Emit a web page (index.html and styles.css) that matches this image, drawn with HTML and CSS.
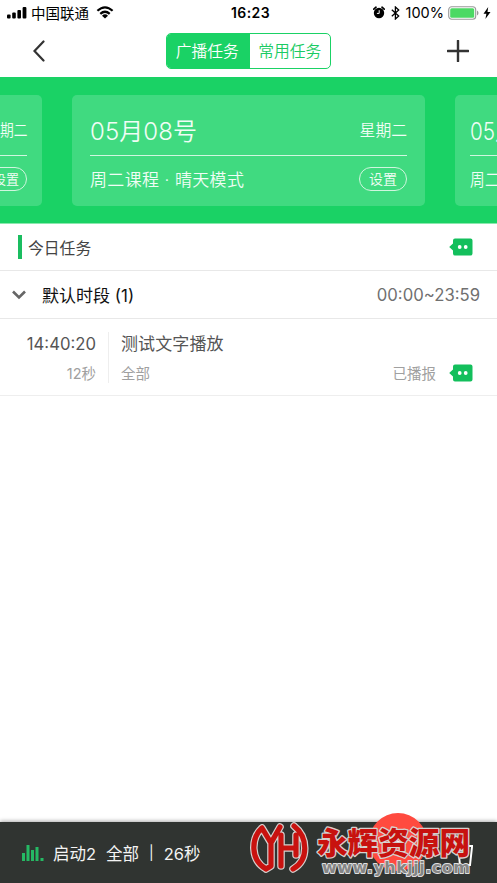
FILE: index.html
```html
<!DOCTYPE html>
<html lang="zh-CN">
<head>
<meta charset="utf-8">
<title>广播任务</title>
<link rel="stylesheet" href="styles.css">
</head>
<body>
<div class="app">
  <header class="status">
    <svg class="signal" width="20" height="12" viewBox="0 0 20 12"><rect x="0" y="7.5" width="3.6" height="4" rx="1"/><rect x="5.2" y="5.5" width="3.6" height="6" rx="1"/><rect x="10.4" y="3" width="3.6" height="8.500" rx="1"/><rect x="15.600" y="0" width="3.8" height="11.500" rx="1"/></svg>
    <span class="carrier">中国联通</span>
    <svg class="wifi" width="18" height="13" viewBox="0 0 18 13"><g fill="none" stroke="#000" stroke-width="2.200"><path d="M1.400 4.800Q9-2.200 16.600 4.800"/><path d="M4.300 7.900Q9 3.600 13.700 7.900"/></g><path d="M6 9.700Q9 7 12 9.700L9 12.600Z"/></svg>
    <span class="clock">16:23</span>
    <div class="system">
      <svg width="12" height="13" viewBox="0 0 12 13"><circle cx="6" cy="7" r="5.200"/><path d="M.8 3.200 3 1.200M11.200 3.200 9 1.200" stroke="#000" stroke-width="1.700" stroke-linecap="round"/><path d="M6.200 4.200v3.200H3.900" stroke="#fff" fill="none"/></svg>
      <svg class="bluetooth" width="9" height="14" viewBox="0 0 9 14"><path d="M.8 3.800 7.700 10 4.400 13V1L7.700 4 .8 10.200" fill="none" stroke="#000" stroke-width="1.300"/></svg>
      <span class="percent">100%</span>
      <svg class="battery" width="31" height="14" viewBox="0 0 31 14"><rect x=".7" y=".7" width="27" height="12.600" rx="3" fill="#fff" stroke="#999" stroke-width="1.100"/><rect x="2.200" y="2.200" width="24" height="9.600" rx="1.500" fill="#4cd964"/><path d="M29 4.600q1.500.6 1.500 2.400T29 9.400Z" fill="#999"/></svg>
      <svg class="bolt" width="8" height="12" viewBox="0 0 8 12"><path d="M5.200 0 .5 6.700h2.900L2.400 12 7.500 4.900H4.500Z"/></svg>
    </div>
  </header>
  <nav class="nav">
    <svg class="back" width="12" height="22" viewBox="0 0 12 22"><path d="M10.500 1.500 1.500 11l9 9.500" fill="none" stroke="#333" stroke-width="2.200" stroke-linecap="round"/></svg>
    <div class="tabs"><span class="tab active">广播任务</span><span class="tab">常用任务</span></div>
    <svg class="add" width="22" height="22" viewBox="0 0 22 22"><path d="M11 .8v20.400M.8 11h20.400" stroke="#333" stroke-width="2.400" stroke-linecap="round"/></svg>
  </nav>
  <section class="carousel">
    <article class="card side">
      <div class="card-top"><span class="date">05月08号</span><span class="weekday">星期二</span></div>
      <div class="card-bottom"><span class="mode">周二课程 · 晴天模式</span><span class="setting">设置</span></div>
    </article>
    <article class="card">
      <div class="card-top"><span class="date">05月08号</span><span class="weekday">星期二</span></div>
      <div class="card-bottom"><span class="mode">周二课程 · 晴天模式</span><span class="setting">设置</span></div>
    </article>
    <article class="card side">
      <div class="card-top"><span class="date">05月08号</span><span class="weekday">星期二</span></div>
      <div class="card-bottom"><span class="mode">周二课程 · 晴天模式</span><span class="setting">设置</span></div>
    </article>
  </section>
  <section class="today">
    <i class="marker"></i><h2>今日任务</h2>
    <svg class="bubble" width="24" height="18" viewBox="0 0 24 18"><path d="M6 .5h15.500q2 0 2 2v13q0 2-2 2H6q-2 0-2-2V12.500L.2 9 4 5.500V2.500q0-2 2-2Z" fill="#13bf5c"/><circle cx="10.700" cy="9" r="1.900" fill="#fff"/><circle cx="16.700" cy="9" r="1.900" fill="#fff"/></svg>
  </section>
  <section class="group">
    <svg width="14" height="10" viewBox="0 0 14 10"><path d="m1 1.500 6 6 6-6" fill="none" stroke="#666" stroke-width="2.600"/></svg>
    <h3>默认时段 (1)</h3>
    <span class="range">00:00~23:59</span>
  </section>
  <section class="task">
    <div class="time"><span class="start">14:40:20</span><span class="sub">12秒</span></div>
    <div class="detail"><span class="name">测试文字播放</span><span class="sub">全部</span></div>
    <div class="state"><span class="sub">已播报</span>
      <svg class="bubble" width="24" height="18" viewBox="0 0 24 18"><path d="M6 .5h15.500q2 0 2 2v13q0 2-2 2H6q-2 0-2-2V12.500L.2 9 4 5.500V2.500q0-2 2-2Z" fill="#13bf5c"/><circle cx="10.700" cy="9" r="1.900" fill="#fff"/><circle cx="16.700" cy="9" r="1.900" fill="#fff"/></svg>
    </div>
  </section>
  <footer class="player">
    <svg class="bars" width="22" height="18" viewBox="0 0 22 18" fill="#25b964"><rect x="0" y="9" width="3" height="8"/><rect x="4.500" y="1" width="3" height="16"/><rect x="9" y="6" width="3" height="11"/><rect x="13.500" y="3" width="3" height="14"/><rect x="18.500" y="14" width="3" height="3"/></svg>
    <span class="p-name">启动2</span><span class="p-zone">全部</span><span class="p-sep">|</span><span class="p-time">26秒</span>
    <i class="record"></i>
    <svg class="brand" width="247" height="63" viewBox="250 820 247 63">
      <defs><path id="mark" d="M262 828C251 838 250 860 266 869M262 828l9 15 9-16M271 843v23L266 869M281 835v31M281 848h15M296 835v20M294 826C308 837 309 860 293 869"/></defs>
      <path d="M391 837l12 6-12 7Z" fill="#fff"/>
      <path d="M455 846h18M458 847l2 18h10l2-18M461 846v-3h6v3" fill="none" stroke="#fff" stroke-width="2"/>
      <g fill="none" stroke-linejoin="round" stroke-linecap="round">
        <use href="#mark" stroke="#d6d1cf" stroke-width="7.600"/>
        <use href="#mark" stroke="#c8120f" stroke-width="5.200"/>
      </g>
      <text class="brand-name" x="317" y="853.500" textLength="153" lengthAdjust="spacingAndGlyphs">永辉资源网</text>
      <text class="brand-url" x="322" y="873" textLength="148" lengthAdjust="spacing">www.yhkjjj.com</text>
    </svg>
  </footer>
</div>
</body>
</html>
```
FILE: styles.css
```css
* { box-sizing: border-box; }
body { margin: 0; background: #fff; font-family: Inter, "Noto Sans CJK SC", sans-serif; }
svg { display: block; flex: none; }
h2, h3 { margin: 0; font-weight: 400; }
span { white-space: nowrap; }
.app { width: 497px; height: 883px; display: flex; flex-direction: column; overflow: hidden; }

.status { height: 25px; display: flex; align-items: center; padding: 0 6px 0 7px; line-height: 25px; color: #000; }
.carrier { margin-left: 4px; padding-top: 1px; font-size: 14.5px; }
.wifi { margin-left: 7px; }
.clock { margin-left: 117px; font-size: 14px; font-weight: 600; letter-spacing: .4px; }
.system { margin-left: auto; display: flex; align-items: center; }
.bluetooth { margin-left: 6px; }
.percent { margin-left: 6px; font-size: 14.5px; }
.battery { margin-left: 4px; }
.bolt { margin-left: 4px; }

.nav { height: 52px; display: flex; align-items: center; justify-content: space-between; padding: 0 28px 0 33px; }
.tabs { width: 165px; height: 36px; margin-left: 5px; display: flex; border: 1px solid #1ad265; border-radius: 5px; overflow: hidden; }
.tab { flex: 1; padding-top: 1px; text-align: center; line-height: 34px; font-size: 15.8px; font-weight: 350; color: #1acb63; }
.tab:first-child { padding-right: 2px; }
.active { background: #1ad265; color: #fff; }

.carousel { height: 147px; padding-top: 18px; background: #1ad265; display: flex; justify-content: center; gap: 30px; border-bottom: 1px solid #8be8ae; }
.card { flex: none; width: 353px; height: 111px; padding: 14px 18px; border-radius: 5px; background: #40da80; color: #f0fdf5; font-weight: 350; }
.side { padding: 14px 15px; }
.card-top { height: 47px; padding-bottom: 5px; display: flex; align-items: center; justify-content: space-between; border-bottom: 1px solid #d0f6df; }
.date { padding-bottom: 1px; font-size: 24px; letter-spacing: .1px; }
.weekday { font-size: 15.8px; }
.card-bottom { height: 46px; display: flex; align-items: center; justify-content: space-between; }
.mode { padding-bottom: 2px; font-size: 17px; letter-spacing: .36px; }
.side .date, .side .mode { transform: scaleX(.86); transform-origin: left; }
.side .weekday { transform: scaleX(.87); transform-origin: right; }
.setting { width: 48px; height: 24px; border: 1px solid #d0f6df; border-radius: 12px; text-align: center; font-size: 14px; line-height: 22px; }
.side .setting { width: 42px; font-size: 13px; }

.today { height: 47px; display: flex; align-items: center; padding: 0 24px 0 18px; border-bottom: 1px solid #e8e8e8; color: #444; }
.marker { width: 4px; height: 24px; background: #1abd60; }
.today h2 { margin-left: 6px; padding-top: 3px; font-size: 15.8px; line-height: 24px; }
.bubble { margin-left: auto; }
.group { height: 48px; display: flex; align-items: center; padding: 0 17px 0 12px; border-bottom: 1px solid #e8e8e8; }
.group h3 { margin-left: 16px; padding-top: 2px; font-size: 17px; line-height: 24px; color: #111; }
.range { margin-left: auto; padding-top: 1px; font-size: 16.7px; color: #707070; }
.task { height: 77px; display: flex; padding: 13px 24px 12px 0; border-bottom: 1px solid #eee; color: #555; }
.time, .detail { display: flex; flex-direction: column; justify-content: space-between; font-size: 17px; line-height: 24px; }
.time { width: 109px; height: 51px; padding-right: 12px; text-align: right; border-right: 1px solid #eee; }
.start { font-size: 16.7px; }
.detail { height: 51px; margin-left: 12px; }
.name { letter-spacing: .1px; }
.sub { font-size: 14.5px; line-height: 18px; color: #a0a0a0; }
.state { margin-left: auto; align-self: flex-end; height: 18px; display: flex; align-items: center; gap: 13px; }
.state .bubble { margin-bottom: 2px; }

.player { position: relative; height: 61px; margin-top: auto; display: flex; align-items: center; padding-left: 22px; background: #303431; box-shadow: 0 -1px 4px #0005; color: #f4f4f4; font-size: 16.5px; }
.p-name { margin-left: 9px; }
.p-zone { margin-left: 10px; }
.p-sep { margin-left: 10px; font-size: 14px; }
.p-time { margin-left: 10px; }
.record { position: absolute; left: 369px; top: -9px; width: 58px; height: 58px; border-radius: 50%; background: #ff4a3f; }
.brand { position: absolute; left: 250px; top: -2px; }
.brand-name { font: 900 31px "Noto Sans CJK SC", sans-serif; fill: #c8120f; stroke: #d6d1cf; stroke-width: 2.6px; paint-order: stroke; stroke-linejoin: round; }
.brand-url { font: 700 16px "DejaVu Sans", sans-serif; fill: #858585; stroke: #e0e0e0; stroke-width: 1.8px; paint-order: stroke; stroke-linejoin: round; }
```
